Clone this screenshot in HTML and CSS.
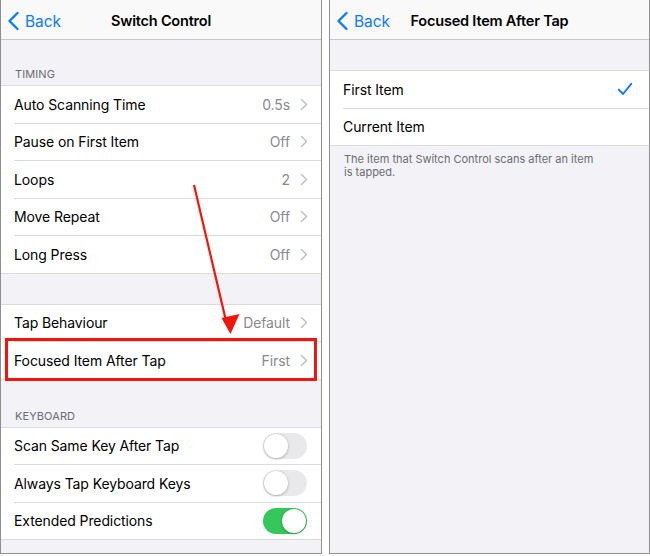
FILE: index.html
```html
<!DOCTYPE html>
<html>
<head>
<meta charset="utf-8">
<link rel="stylesheet" href="styles.css">
</head>
<body>
<div class="screens">
  <div class="panel">
    <div class="nav">
      <div class="back"><svg class="chev-back" width="13" height="20" viewBox="0 0 13 20"><path d="M10.5 2 L2.5 10 L10.5 18" fill="none" stroke="#0a7aff" stroke-width="2.4" stroke-linecap="round" stroke-linejoin="round"/></svg><span>Back</span></div>
      <div class="title">Switch Control</div>
    </div>
    <div class="header h-timing">TIMING</div>
    <div class="group">
      <div class="row"><span class="label">Auto Scanning Time</span><span class="value">0.5s</span><svg class="chev" width="8" height="13" viewBox="0 0 8 13"><path d="M1.5 1.5 L6.5 6.5 L1.5 11.5" fill="none" stroke="#c4c4c7" stroke-width="1.6" stroke-linecap="round" stroke-linejoin="round"/></svg></div>
      <div class="row"><span class="label">Pause on First Item</span><span class="value">Off</span><svg class="chev" width="8" height="13" viewBox="0 0 8 13"><path d="M1.5 1.5 L6.5 6.5 L1.5 11.5" fill="none" stroke="#c4c4c7" stroke-width="1.6" stroke-linecap="round" stroke-linejoin="round"/></svg></div>
      <div class="row"><span class="label">Loops</span><span class="value">2</span><svg class="chev" width="8" height="13" viewBox="0 0 8 13"><path d="M1.5 1.5 L6.5 6.5 L1.5 11.5" fill="none" stroke="#c4c4c7" stroke-width="1.6" stroke-linecap="round" stroke-linejoin="round"/></svg></div>
      <div class="row"><span class="label">Move Repeat</span><span class="value">Off</span><svg class="chev" width="8" height="13" viewBox="0 0 8 13"><path d="M1.5 1.5 L6.5 6.5 L1.5 11.5" fill="none" stroke="#c4c4c7" stroke-width="1.6" stroke-linecap="round" stroke-linejoin="round"/></svg></div>
      <div class="row"><span class="label">Long Press</span><span class="value">Off</span><svg class="chev" width="8" height="13" viewBox="0 0 8 13"><path d="M1.5 1.5 L6.5 6.5 L1.5 11.5" fill="none" stroke="#c4c4c7" stroke-width="1.6" stroke-linecap="round" stroke-linejoin="round"/></svg></div>
    </div>
    <div class="spacer"></div>
    <div class="group">
      <div class="row"><span class="label">Tap Behaviour</span><span class="value">Default</span><svg class="chev" width="8" height="13" viewBox="0 0 8 13"><path d="M1.5 1.5 L6.5 6.5 L1.5 11.5" fill="none" stroke="#c4c4c7" stroke-width="1.6" stroke-linecap="round" stroke-linejoin="round"/></svg></div>
      <div class="row"><span class="label">Focused Item After Tap</span><span class="value">First</span><svg class="chev" width="8" height="13" viewBox="0 0 8 13"><path d="M1.5 1.5 L6.5 6.5 L1.5 11.5" fill="none" stroke="#c4c4c7" stroke-width="1.6" stroke-linecap="round" stroke-linejoin="round"/></svg></div>
    </div>
    <div class="header h-keyboard">KEYBOARD</div>
    <div class="group">
      <div class="row"><span class="label">Scan Same Key After Tap</span><span class="toggle"><span class="knob"></span></span></div>
      <div class="row"><span class="label">Always Tap Keyboard Keys</span><span class="toggle"><span class="knob"></span></span></div>
      <div class="row"><span class="label">Extended Predictions</span><span class="toggle on"><span class="knob"></span></span></div>
    </div>
    <div class="highlight"></div>
    <svg class="arrow" width="321" height="556" viewBox="0 0 321 556"><line x1="193" y1="185" x2="225.5" y2="323" stroke="#f2150c" stroke-width="2.2"/><polygon points="220.5,318 238.5,314 229.5,334" fill="#f2150c"/></svg>
  </div>
  <div class="panel">
    <div class="nav">
      <div class="back"><svg class="chev-back" width="13" height="20" viewBox="0 0 13 20"><path d="M10.5 2 L2.5 10 L10.5 18" fill="none" stroke="#0a7aff" stroke-width="2.4" stroke-linecap="round" stroke-linejoin="round"/></svg><span>Back</span></div>
      <div class="title">Focused Item After Tap</div>
    </div>
    <div class="spacer"></div>
    <div class="group">
      <div class="row"><span class="label">First Item</span><svg class="check" width="16" height="14" viewBox="0 0 16 14"><path d="M1.8 7.6 L6 12 L14.2 1.8" fill="none" stroke="#0a7aff" stroke-width="1.9" stroke-linecap="round" stroke-linejoin="round"/></svg></div>
      <div class="row"><span class="label">Current Item</span></div>
    </div>
    <div class="footer">The item that Switch Control scans after an item<br>is tapped.</div>
  </div>
</div>
</body>
</html>
```

FILE: styles.css
```css
* { box-sizing: border-box; }
html, body { margin: 0; padding: 0; background: #ffffff; }
body {
  font-family: Inter, "Liberation Sans", sans-serif;
  color: #000;
  width: 650px;
  height: 556px;
  overflow: hidden;
}
.screens {
  display: flex;
  gap: 7px;
  align-items: flex-start;
}
.panel {
  position: relative;
  width: 322px;
  height: 554px;
  background: #f2f2f7;
  border: 1px solid #8f8f8f;
  border-top: none;
  overflow: hidden;
}
.panel + .panel { width: 321px; }
.nav {
  position: relative;
  height: 40px;
  background: #f9f9f9;
  border-bottom: 1px solid #c8c8cb;
  display: flex;
  align-items: center;
  justify-content: center;
}
.back {
  position: absolute;
  left: 6px;
  top: 11px;
  display: flex;
  align-items: center;
  gap: 5px;
  color: #0a7aff;
  font-size: 15.5px;
  letter-spacing: -0.1px;
}
.title {
  font-size: 14.5px;
  font-weight: 600;
  letter-spacing: -0.2px;
  margin-top: 1px;
}
.header {
  height: 45px;
  display: flex;
  align-items: flex-end;
  padding: 0 14px 4px;
  font-size: 11px;
  color: #6d6d72;
  letter-spacing: 0.1px;
}
.h-keyboard { height: 47px; }
.spacer { height: 30px; }
.group {
  background: #ffffff;
  border-top: 1px solid #dcdcdf;
  border-bottom: 1px solid #dcdcdf;
}
.row {
  height: 37.5px;
  display: flex;
  align-items: center;
  padding-right: 14px;
  margin-left: 13px;
  border-bottom: 1px solid #dcdcdf;
}
.row:last-child { border-bottom: none; height: 36.5px; }
.label {
  flex: 1;
  font-size: 14px;
  letter-spacing: -0.1px;
  color: #000;
}
.value {
  font-size: 14px;
  color: #8a8a8e;
  margin-right: 10px;
  letter-spacing: -0.1px;
}
.chev { display: block; margin-right: -1px; }
.check { display: block; margin-right: 2px; }
.toggle {
  position: relative;
  width: 44px;
  height: 26px;
  border-radius: 13px;
  background: #e9e9eb;
}
.toggle .knob {
  position: absolute;
  top: 1px;
  left: 1px;
  width: 24px;
  height: 24px;
  border-radius: 50%;
  background: #fff;
  box-shadow: 0 1px 3px rgba(0,0,0,0.25), 0 0 0 0.5px rgba(0,0,0,0.05);
}
.toggle.on { background: #34c759; }
.toggle.on .knob { left: 19px; }
.footer {
  padding: 7px 14px 0;
  font-size: 11px;
  line-height: 13px;
  color: #6d6d72;
}
.highlight {
  position: absolute;
  left: 4px;
  top: 338px;
  width: 312px;
  height: 43px;
  border: 3px solid #f2150c;
}
.arrow {
  position: absolute;
  left: 0;
  top: 0;
}
```
